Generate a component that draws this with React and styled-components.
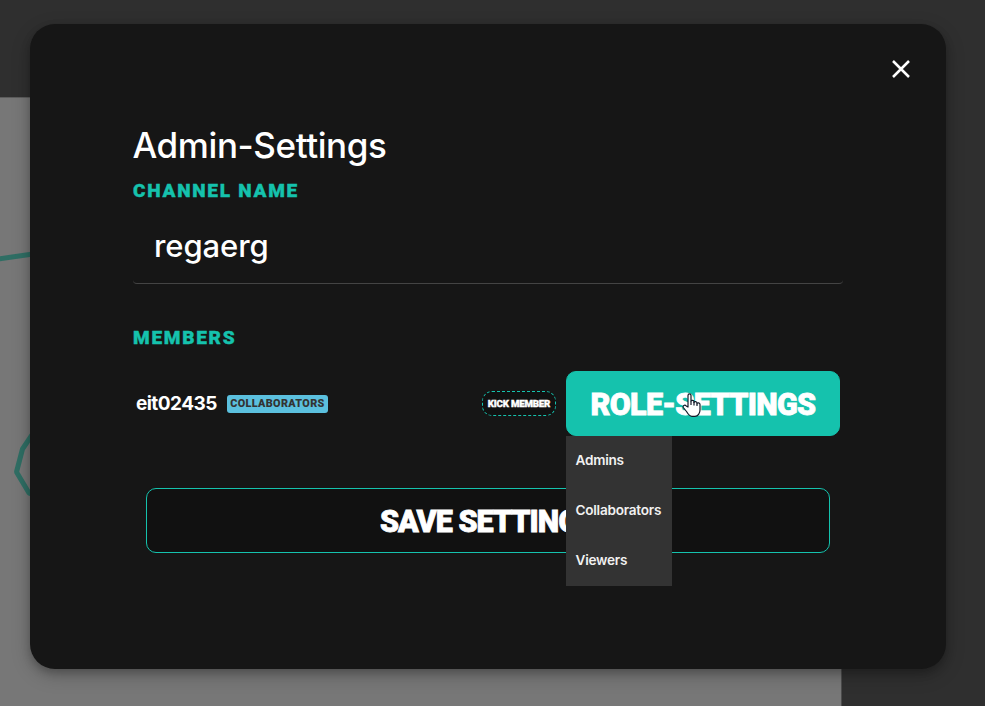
import React from "react";
import styled, { createGlobalStyle } from "styled-components";

const teal = "#15c2ad";

const GlobalStyle = createGlobalStyle`
  * { box-sizing: border-box; }
  html, body { margin: 0; height: 100%; overflow: hidden; background: #2f2f2f; }
  h1, h2, ul { margin: 0; padding: 0; font-weight: inherit; }
  button, input { margin: 0; font: inherit; color: inherit; }
`;

const Page = styled.div`
  position: relative;
  width: 985px;
  height: 706px;
  padding-top: 97px;
  overflow: hidden;
  background: #2f2f2f;
  font-family: Inter, "Liberation Sans", sans-serif;
  color: #fff;
`;

const Board = styled.div`
  width: 842px;
  height: 609px;
  background: #777;
  border-top: 1px solid #5c5c5c;
  border-right: 1px solid #4c4c4c;
`;

const Sketch = styled.svg`
  display: block;
`;

const Modal = styled.section`
  position: absolute;
  top: 24px;
  left: 30px;
  width: 916px;
  height: 645px;
  padding: 30px 103px 0;
  border-radius: 25px;
  background: #161616;
  box-shadow: 0 4px 8px rgba(0, 0, 0, 0.22), 0 6px 20px rgba(0, 0, 0, 0.2);
`;

const TopBar = styled.header`
  display: flex;
  justify-content: flex-end;
  height: 69px;
  margin-right: -73px;
`;

const CloseButton = styled.button`
  width: 30px;
  height: 30px;
  padding: 0;
  border: 0;
  background: none;

  svg { display: block; }
`;

const Title = styled.h1`
  height: 56px;
  margin-left: -0.5px;
  font-size: 35px;
  font-weight: 500;
  line-height: 44px;
  letter-spacing: -0.42px;
`;

const Heading = styled.h2`
  height: 24px;
  font-family: Roboto, sans-serif;
  font-size: 19px;
  font-weight: 900;
  line-height: 24px;
  letter-spacing: 1.75px;
  text-transform: uppercase;
  color: ${teal};
  -webkit-text-stroke: 0.4px ${teal};
`;

const NameInput = styled.input`
  display: block;
  width: 710px;
  height: 72px;
  margin: 9px 0 42px;
  padding: 0 20px 4px 21px;
  border: 0;
  border-bottom: 1px solid #444;
  border-radius: 4px;
  outline: 0;
  background: none;
  font-size: 31px;
  font-weight: 500;
  letter-spacing: -0.1px;
`;

const MemberRow = styled.div`
  display: flex;
  align-items: center;
  height: 65px;
  margin-top: 21px;
  padding: 0 3px;
`;

const MemberName = styled.span`
  width: 91px;
  font-size: 19px;
  font-weight: 700;
  letter-spacing: -0.55px;
`;

const RoleBadge = styled.span`
  width: 101px;
  height: 18px;
  border-radius: 3px;
  background: #5bc0de;
  font-family: Roboto, sans-serif;
  font-size: 10.8px;
  font-weight: 900;
  line-height: 17px;
  letter-spacing: 0.35px;
  text-align: center;
  text-transform: uppercase;
  color: #333;
`;

const KickButton = styled.button`
  width: 74px;
  height: 25px;
  margin-left: auto;
  padding: 0;
  border: 1px dashed ${teal};
  border-radius: 10px;
  background: #111;
  font-family: Roboto, sans-serif;
  font-size: 9.7px;
  font-weight: 900;
  line-height: 23px;
  letter-spacing: -0.2px;
  white-space: nowrap;
  text-transform: uppercase;
  -webkit-text-stroke: 0.4px #fff;
`;

const RoleMenu = styled.div`
  position: relative;
  margin-left: 10px;
`;

const BigButton = styled.button`
  display: block;
  width: ${(p) => (p.$filled ? 274 : 684)}px;
  height: 65px;
  padding: ${(p) => (p.$filled ? 2 : 1)}px 0 0;
  border: 1px solid ${teal};
  border-radius: 10px;
  background: ${(p) => (p.$filled ? teal : "#111")};
  font-family: Roboto, sans-serif;
  font-size: 30.5px;
  font-weight: 900;
  line-height: 61px;
  letter-spacing: ${(p) => (p.$filled ? -0.7 : -1)}px;
  text-transform: uppercase;
  -webkit-text-stroke: 0.8px #fff;
`;

const SaveRow = styled.div`
  display: flex;
  justify-content: center;
  margin-top: 52px;
`;

const Dropdown = styled.ul`
  position: absolute;
  z-index: 1;
  top: 65px;
  left: 0;
  width: 106px;
  background: #333;
  list-style: none;
`;

const Option = styled.li`
  height: 50px;
  padding-left: 9.5px;
  font-size: 13.6px;
  font-weight: 600;
  line-height: 49px;
  letter-spacing: -0.25px;
  color: #f1f1f1;
`;

const Cursor = styled.svg`
  position: absolute;
  z-index: 2;
  top: 22px;
  left: 116px;
`;

export default function App() {
  return (
    <>
      <GlobalStyle />
      <Page>
        <Board>
          <Sketch width="120" height="420" fill="none" stroke="#2f6e64" strokeWidth="5" strokeLinejoin="bevel">
            <path d="M-2 161 L40 155" />
            <path d="M36 331 L22.500 351 L16.500 374 L29 395 L40 400" />
          </Sketch>
        </Board>
        <Modal>
          <TopBar>
            <CloseButton aria-label="Close">
              <svg width="30" height="30" fill="none" stroke="#fff" strokeWidth="2.500">
                <path d="M7 7 L23 23 M23 7 L7 23" />
              </svg>
            </CloseButton>
          </TopBar>
          <Title>Admin-Settings</Title>
          <Heading>Channel name</Heading>
          <NameInput defaultValue="regaerg" spellCheck={false} />
          <Heading>Members</Heading>
          <MemberRow>
            <MemberName>eit02435</MemberName>
            <RoleBadge>Collaborators</RoleBadge>
            <KickButton>Kick member</KickButton>
            <RoleMenu>
              <BigButton $filled>Role-Settings</BigButton>
              <Dropdown>
                {["Admins", "Collaborators", "Viewers"].map((role) => (
                  <Option key={role}>{role}</Option>
                ))}
              </Dropdown>
              <Cursor width="19" height="25" viewBox="0 0 19 25">
                <path
                  d="M6 14 V2.500 C6 0.300 9 0.300 9 2.500 V8.500 C9 6.700 12 7 12 8.700 V9.500 C12 8 15 8.300 15 10 V10.800 C15 9.400 18 9.700 18 11.500 V17 C18 20 16 23.300 13 23.300 H10 C7.500 23.300 6 21 4.500 18.500 L1.300 14.500 C0.300 12.500 2.800 11.500 4.200 12.900 Z"
                  fill="#fff" stroke="#111827" strokeWidth="1.200" strokeLinejoin="round"
                />
                <path d="M9 8.500 V12 M12 9 V12.500 M15 10.500 V13" fill="none" stroke="#111827" strokeWidth="1.200" />
              </Cursor>
            </RoleMenu>
          </MemberRow>
          <SaveRow>
            <BigButton>Save Settings</BigButton>
          </SaveRow>
        </Modal>
      </Page>
    </>
  );
}
